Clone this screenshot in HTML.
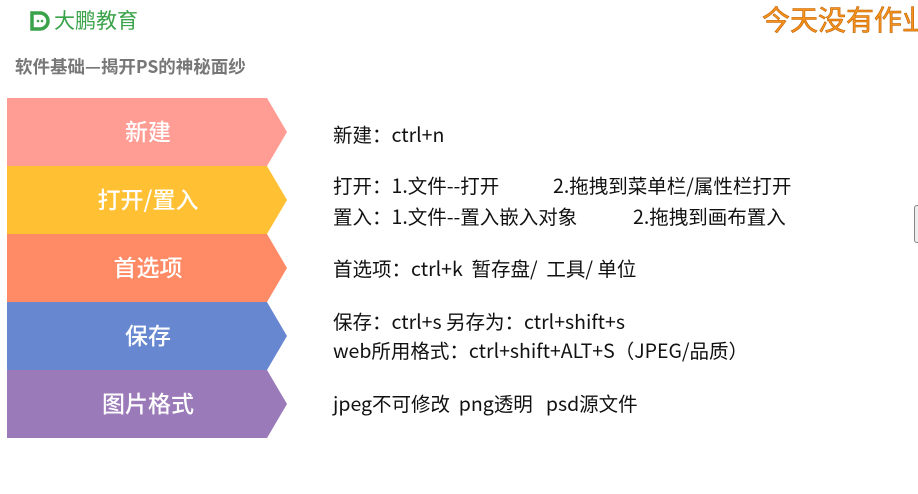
<!DOCTYPE html>
<html><head><meta charset="utf-8"><style>
body{margin:0;width:918px;height:494px;background:#fff;position:relative;overflow:hidden;font-family:"Noto Sans CJK SC",sans-serif}
.a{position:absolute}
.t{position:absolute;left:333px;font-size:19.5px;color:#111;line-height:22px;white-space:pre;font-family:"Noto Sans CJK SC",sans-serif}
.lab{position:absolute;left:7px;width:282px;text-align:center;color:#fff;font-size:23px;line-height:64px;height:68px;font-weight:500}
</style></head><body>
<svg class="a" style="left:30px;top:11px" width="22" height="20" viewBox="0 0 22 20"><path d="M2 2h8a8 8 0 0 1 0 16H2z" fill="none" stroke="#3aa34a" stroke-width="3.5"/><circle cx="8" cy="10" r="1.3" fill="#3aa34a"/><circle cx="12" cy="10" r="1.3" fill="#3aa34a"/></svg>
<div class="a" style="left:54px;top:6px;font-size:21px;color:#3aa34a;line-height:28px">大鹏教育</div>
<div class="a" style="left:762px;top:0px;font-size:28px;color:#f7941d;line-height:38px;-webkit-text-stroke:0.6px #c06000;white-space:nowrap">今天没有作业</div>
<div class="a" style="left:15px;top:55px;font-size:17.5px;color:#777;font-weight:bold;line-height:24px;white-space:nowrap">软件基础—揭开PS的神秘面纱</div>
<svg class="a" style="left:0;top:0" width="300" height="494">
<polygon points="7,98 267,98 287,132 267,166 7,166" fill="#ff9c94"/>
<polygon points="7,166 267,166 287,200 267,234 7,234" fill="#ffc133"/>
<polygon points="7,234 267,234 287,268 267,302 7,302" fill="#ff8a66"/>
<polygon points="7,302 267,302 287,336 267,370 7,370" fill="#6788d0"/>
<polygon points="7,370 267,370 287,404 267,438 7,438" fill="#9a7ab8"/>
</svg>
<div class="lab" style="top:98px">新建</div>
<div class="lab" style="top:166px">打开/置入</div>
<div class="lab" style="top:234px">首选项</div>
<div class="lab" style="top:302px">保存</div>
<div class="lab" style="top:370px">图片格式</div>
<div class="t" style="top:123px">新建：ctrl+n</div>
<div class="t" style="top:174px">打开：1.文件--打开</div>
<div class="t" style="top:174px;left:553px">2.拖拽到菜单栏/属性栏打开</div>
<div class="t" style="top:205px">置入：1.文件--置入嵌入对象</div>
<div class="t" style="top:205px;left:633px">2.拖拽到画布置入</div>
<div class="t" style="top:257px">首选项：ctrl+k  暂存盘/  工具/ 单位</div>
<div class="t" style="top:310px">保存：ctrl+s 另存为：ctrl+shift+s</div>
<div class="t" style="top:339px">web所用格式：ctrl+shift+ALT+S（JPEG/品质）</div>
<div class="t" style="top:392px">jpeg不可修改  png透明   psd源文件</div>
<div class="a" style="left:914px;top:205px;width:6px;height:36px;border:1px solid #888;border-radius:3px;background:#eee"></div>
</body></html>
